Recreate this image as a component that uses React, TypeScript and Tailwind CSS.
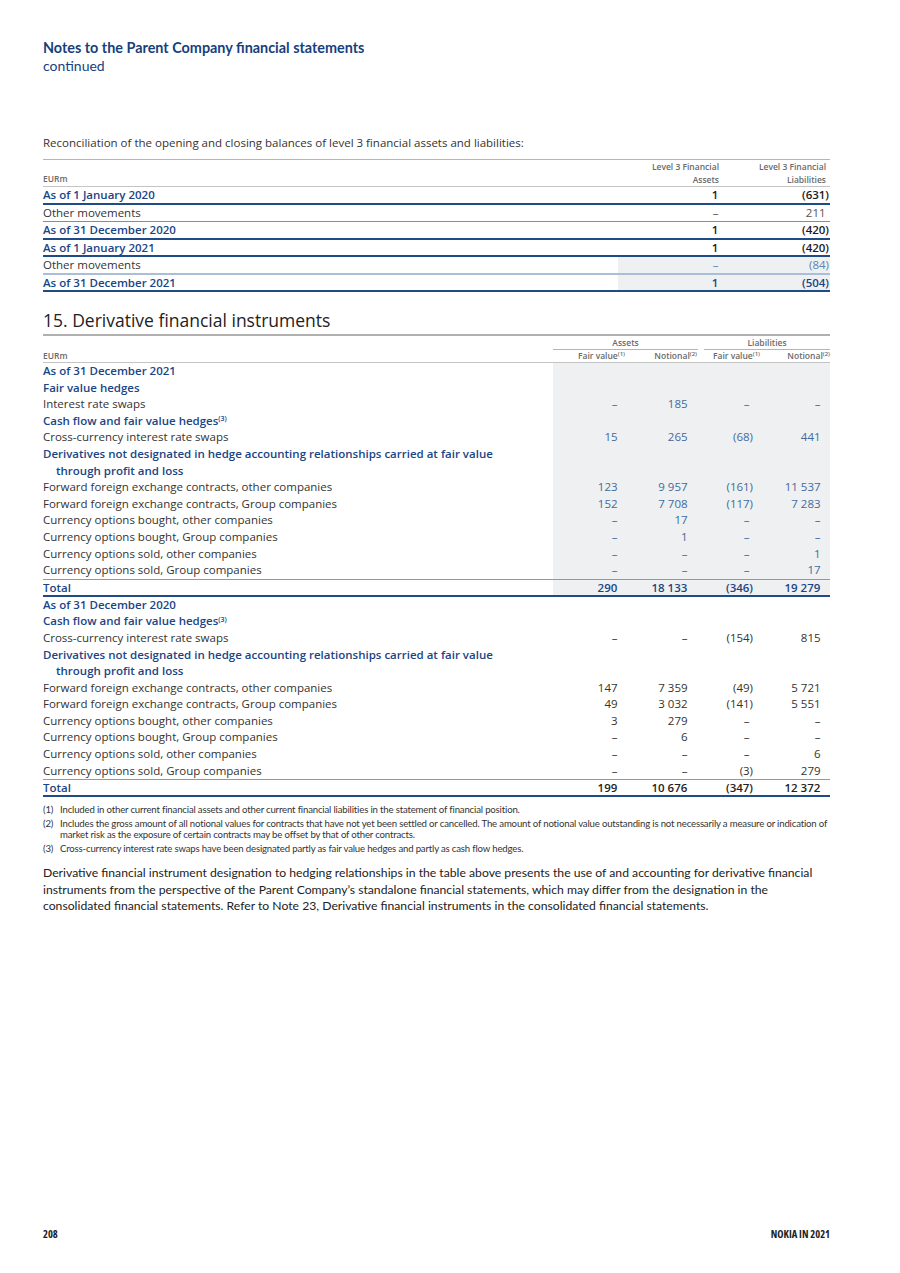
import React from 'react';

type Line = 'dark' | 'light' | 'pale';

interface ReconRow {
  label: string;
  assets: string;
  liabilities: string;
  bold: boolean;
  line: Line;
  shaded?: boolean;
}

const recon: ReconRow[] = [
  { label: 'As of 1 January 2020', assets: '1', liabilities: '(631)', bold: true, line: 'dark' },
  { label: 'Other movements', assets: '–', liabilities: '211', bold: false, line: 'light' },
  { label: 'As of 31 December 2020', assets: '1', liabilities: '(420)', bold: true, line: 'dark' },
  { label: 'As of 1 January 2021', assets: '1', liabilities: '(420)', bold: true, line: 'dark' },
  { label: 'Other movements', assets: '–', liabilities: '(84)', bold: false, line: 'pale', shaded: true },
  { label: 'As of 31 December 2021', assets: '1', liabilities: '(504)', bold: true, line: 'dark', shaded: true },
];

type DRow =
  | { kind: 'head'; label: string; note?: string; second?: string }
  | { kind: 'row'; label: string; values: string[] };

const deriv2021: DRow[] = [
  { kind: 'head', label: 'As of 31 December 2021' },
  { kind: 'head', label: 'Fair value hedges' },
  { kind: 'row', label: 'Interest rate swaps', values: ['–', '185', '–', '–'] },
  { kind: 'head', label: 'Cash flow and fair value hedges', note: '(3)' },
  { kind: 'row', label: 'Cross-currency interest rate swaps', values: ['15', '265', '(68)', '441'] },
  {
    kind: 'head',
    label: 'Derivatives not designated in hedge accounting relationships carried at fair value',
    second: 'through profit and loss',
  },
  { kind: 'row', label: 'Forward foreign exchange contracts, other companies', values: ['123', '9 957', '(161)', '11 537'] },
  { kind: 'row', label: 'Forward foreign exchange contracts, Group companies', values: ['152', '7 708', '(117)', '7 283'] },
  { kind: 'row', label: 'Currency options bought, other companies', values: ['–', '17', '–', '–'] },
  { kind: 'row', label: 'Currency options bought, Group companies', values: ['–', '1', '–', '–'] },
  { kind: 'row', label: 'Currency options sold, other companies', values: ['–', '–', '–', '1'] },
  { kind: 'row', label: 'Currency options sold, Group companies', values: ['–', '–', '–', '17'] },
];

const deriv2020: DRow[] = [
  { kind: 'head', label: 'As of 31 December 2020' },
  { kind: 'head', label: 'Cash flow and fair value hedges', note: '(3)' },
  { kind: 'row', label: 'Cross-currency interest rate swaps', values: ['–', '–', '(154)', '815'] },
  {
    kind: 'head',
    label: 'Derivatives not designated in hedge accounting relationships carried at fair value',
    second: 'through profit and loss',
  },
  { kind: 'row', label: 'Forward foreign exchange contracts, other companies', values: ['147', '7 359', '(49)', '5 721'] },
  { kind: 'row', label: 'Forward foreign exchange contracts, Group companies', values: ['49', '3 032', '(141)', '5 551'] },
  { kind: 'row', label: 'Currency options bought, other companies', values: ['3', '279', '–', '–'] },
  { kind: 'row', label: 'Currency options bought, Group companies', values: ['–', '6', '–', '–'] },
  { kind: 'row', label: 'Currency options sold, other companies', values: ['–', '–', '–', '6'] },
  { kind: 'row', label: 'Currency options sold, Group companies', values: ['–', '–', '(3)', '279'] },
];

const colW = ['w-[73px]', 'w-[72px]', 'w-[63px]', 'w-[69px]'];
const colPad = ['pr-[5px]', 'pr-[7px]', 'pr-[8px]', 'pr-[6px]'];

// keeps figures aligned whether or not they close with a bracket
function Num({ v }: { v: string }) {
  if (v.endsWith(')')) return <>{v}</>;
  return (
    <>
      {v}
      <span className="invisible">)</span>
    </>
  );
}

const lineClass: Record<Line, string> = {
  dark: 'border-b-2 border-[#1f4c86]',
  light: 'border-b border-[#6f92bd]',
  pale: 'border-b-2 border-[#a9bfd9]',
};

function DerivSection({ rows, shaded }: { rows: DRow[]; shaded: boolean }) {
  const cellBg = shaded ? 'bg-[#eef0f1]' : '';
  const numColor = shaded ? 'text-[#3f6b9f]' : 'text-[#333]';
  return (
    <>
      {rows.map((r, i) => (
        <div key={i} className="flex">
          <div className="flex-1 leading-[16.6px]">
            {r.kind === 'head' ? (
              <div className="font-semibold text-[#1a4585]">
                {r.label}
                {r.note && <sup className="text-[7px] font-semibold">{r.note}</sup>}
                {r.second && <div className="pl-[13px]">{r.second}</div>}
              </div>
            ) : (
              <div className="text-[#333]">{r.label}</div>
            )}
          </div>
          {colW.map((w, c) => (
            <div key={c} className={`${w} ${colPad[c]} ${cellBg} ${numColor} text-right leading-[16.6px]`}>
              {r.kind === 'row' ? <Num v={r.values[c]} /> : null}
            </div>
          ))}
        </div>
      ))}
    </>
  );
}

function TotalRow({ values, shaded }: { values: string[]; shaded: boolean }) {
  return (
    <div className="flex h-[18px] border-t border-[#7d9cc4] border-b-2 border-b-[#1f4c86] items-center">
      <div className="flex-1 font-semibold text-[#1a4585]">Total</div>
      {colW.map((w, c) => (
        <div
          key={c}
          className={`${w} ${colPad[c]} h-full flex items-center justify-end font-semibold ${
            shaded ? 'bg-[#eef0f1] text-[#1a4585]' : 'text-[#222]'
          }`}
        >
          <Num v={values[c]} />
        </div>
      ))}
    </div>
  );
}

export default function App() {
  return (
    <div className="w-[900px] h-[1273px] bg-white flex flex-col pl-[43px] pr-[70px] pt-[39px] pb-[33px] font-['Open_Sans',sans-serif] text-[11.5px] text-[#333]">
      <div className="font-['Lato',sans-serif] leading-[18px] text-[#173f7b]">
        <div className="font-bold text-[14.4px]">Notes to the Parent Company financial statements</div>
        <div className="text-[14px]">continued</div>
      </div>

      <p className="mt-[60px] leading-[16px] text-[#333]">
        Reconciliation of the opening and closing balances of level 3 financial assets and liabilities:
      </p>

      {/* level 3 reconciliation */}
      <div className="mt-[8px] border-t border-[#b5b5b5]">
        <div className="flex h-[27px] border-b border-[#c4c4c4] text-[8.5px] font-semibold text-[#6a6a6a] leading-[13px]">
          <div className="flex-1 self-end pb-[1px]">EURm</div>
          <div className="w-[106px] text-right pr-[5px]">
            Level 3 Financial
            <br />
            Assets
          </div>
          <div className="w-[106px] text-right pr-[4px]">
            Level 3 Financial
            <br />
            Liabilities
          </div>
        </div>
        {recon.map((r, i) => {
          const numCls = r.shaded
            ? r.bold
              ? 'text-[#1a4585] font-semibold'
              : 'text-[#5b84b8]'
            : r.bold
            ? 'text-[#1b1b1b] font-semibold'
            : 'text-[#555]';
          return (
            <div key={i} className={`flex h-[17.5px] ${lineClass[r.line]}`}>
              <div className={`flex-1 flex items-center ${r.bold ? 'font-semibold text-[#1a4585]' : 'text-[#333]'}`}>
                {r.label}
              </div>
              <div
                className={`w-[106px] flex items-center justify-end pr-[2px] ${numCls} ${r.shaded ? 'bg-[#eef0f1]' : ''}`}
              >
                <Num v={r.assets} />
              </div>
              <div
                className={`w-[106px] flex items-center justify-end pr-[1px] ${numCls} ${r.shaded ? 'bg-[#eef0f1]' : ''}`}
              >
                <Num v={r.liabilities} />
              </div>
            </div>
          );
        })}
      </div>

      <h2 className="mt-[18px] text-[17.5px] leading-[20px] pb-[4px] border-b-2 border-[#b0b0b0] text-[#222]">
        15. Derivative financial instruments
      </h2>

      {/* derivative table */}
      <div>
        <div className="flex h-[14px] text-[8.5px] font-semibold text-[#6a6a6a] leading-[13px]">
          <div className="flex-1" />
          <div className="w-[145px] text-center border-b border-[#b5b5b5]">Assets</div>
          <div className="w-[6px]" />
          <div className="w-[126px] text-center border-b border-[#b5b5b5]">Liabilities</div>
        </div>
        <div className="flex h-[13px] items-center border-b border-[#c4c4c4] text-[8.5px] font-semibold text-[#6a6a6a]">
          <div className="flex-1">EURm</div>
          <div className={`${colW[0]} text-right pr-[1px]`}>
            Fair value<sup className="text-[6px]">(1)</sup>
          </div>
          <div className={`${colW[1]} text-right pr-[1px]`}>
            Notional<sup className="text-[6px]">(2)</sup>
          </div>
          <div className={`${colW[2]} text-right pr-[1px]`}>
            Fair value<sup className="text-[6px]">(1)</sup>
          </div>
          <div className={`${colW[3]} text-right`}>
            Notional<sup className="text-[6px]">(2)</sup>
          </div>
        </div>

        <DerivSection rows={deriv2021} shaded />
        <TotalRow values={['290', '18 133', '(346)', '19 279']} shaded />
        <DerivSection rows={deriv2020} shaded={false} />
        <TotalRow values={['199', '10 676', '(347)', '12 372']} shaded={false} />
      </div>

      <div className="font-['Lato',sans-serif] mt-[7px] text-[9.6px] tracking-[-0.17px] leading-[11.5px] text-[#333] flex flex-col gap-[2px]">
        <div className="flex">
          <span className="w-[17px] shrink-0">(1)</span>
          <span>Included in other current financial assets and other current financial liabilities in the statement of financial position.</span>
        </div>
        <div className="flex">
          <span className="w-[17px] shrink-0">(2)</span>
          <span>
            Includes the gross amount of all notional values for contracts that have not yet been settled or cancelled. The amount of notional value outstanding is not necessarily a measure or indication of market risk as the exposure of certain contracts may be offset by that of other contracts.
          </span>
        </div>
        <div className="flex">
          <span className="w-[17px] shrink-0">(3)</span>
          <span>Cross-currency interest rate swaps have been designated partly as fair value hedges and partly as cash flow hedges.</span>
        </div>
      </div>

      <p className="font-['Lato',sans-serif] mt-[11px] text-[12.2px] leading-[16.5px] text-[#222]">
        Derivative financial instrument designation to hedging relationships in the table above presents the use of and accounting for derivative financial instruments from the perspective of the Parent Company’s standalone financial statements, which may differ from the designation in the consolidated financial statements. Refer to Note 23, Derivative financial instruments in the consolidated financial statements.
      </p>

      <div className="font-stretch-[75%] mt-auto flex justify-between text-[10.5px] leading-[12px] font-bold text-[#222]">
        <span>208</span>
        <span>NOKIA IN 2021</span>
      </div>
    </div>
  );
}
